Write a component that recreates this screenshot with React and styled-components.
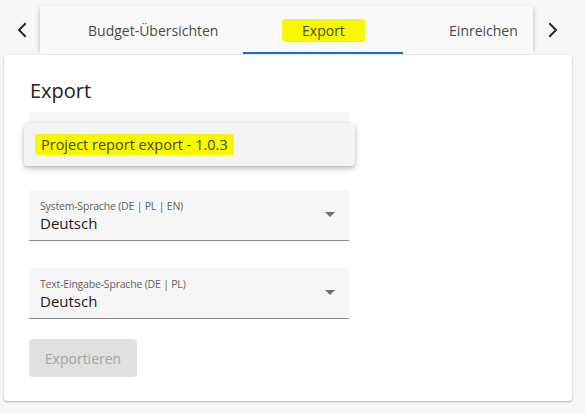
import React from "react";
import styled, { createGlobalStyle } from "styled-components";

const Global = createGlobalStyle`
  html, body { margin: 0; padding: 0; background: #f7f7f7; }
  body { font-family: "Open Sans", "Noto Sans", sans-serif; color: #212121; }
  * { box-sizing: border-box; }
`;

const Page = styled.div`
  width: 585px;
  height: 413px;
  padding: 6px 12px 0 0;
  display: flex;
  flex-direction: column;
`;

const TabBar = styled.div`
  display: flex;
  height: 48px;
`;

const Arrow = styled.button`
  width: 40px;
  flex: none;
  border: 0;
  background: transparent;
  display: flex;
  align-items: center;
  justify-content: center;
  padding: 0 0 0 ${(p) => (p.$side === "left" ? "3px" : "0")};
  color: #333;
`;

const Strip = styled.div`
  flex: 1;
  display: flex;
  overflow: hidden;
  padding-left: 23px;
  background: #f9f9f9;
  box-shadow: -3px 0 4px -2px rgba(0, 0, 0, 0.18), 3px 0 4px -2px rgba(0, 0, 0, 0.18);
  position: relative;
  z-index: 1;
`;

const Tab = styled.div`
  flex: none;
  min-width: 160px;
  padding: 0 25px;
  display: flex;
  align-items: center;
  justify-content: center;
  font-size: 14px;
  font-weight: 500;
  color: #4a4a4a;
  border-bottom: 2px solid ${(p) => (p.$active ? "#1a6fc0" : "transparent")};
  padding-top: 2px;
  white-space: nowrap;
`;

const Marker = styled.span`
  background: #f7f700;
  padding: ${(p) => p.$pad || "2px 20px"};
  border-radius: 3px 6px 2px 5px / 4px 2px 5px 3px;
  color: #4a4a10;
`;

const Card = styled.section`
  margin: 1px 1px 0 4px;
  background: #fff;
  border-radius: 4px;
  box-shadow: 0 1px 3px rgba(0, 0, 0, 0.22), 0 1px 1px rgba(0, 0, 0, 0.08);
  padding: 20px 25px 24px;
  height: 346px;
  position: relative;
`;

const Title = styled.h2`
  margin: 0 0 5px 1px;
  font-size: 20px;
  font-weight: 400;
  line-height: 32px;
  color: #222;
`;

const Form = styled.div`
  display: flex;
  flex-direction: column;
  gap: 27px;
  width: 320px;
`;

const Field = styled.div`
  position: relative;
  height: 51px;
  background: #f6f6f6;
  border-radius: 4px 4px 0 0;
  border-bottom: 1px solid #8c8c8c;
  padding: 9px 11px 0;
  display: flex;
  flex-direction: column;
`;

const Label = styled.span`
  font-size: 10.5px;
  line-height: 14px;
  color: #5f5f5f;
  letter-spacing: -0.2px;
`;

/* small red required mark peeking out above the open menu */
const RequiredMark = styled.span`
  width: 1px;
  height: 4px;
  margin: 7px 0 0 3px;
  background: #c62828;
`;

const Value = styled.span`
  font-size: 15px;
  line-height: 20px;
  color: #1a1a1a;
`;

const Caret = styled.span`
  position: absolute;
  right: 14px;
  top: 22px;
  width: 0;
  height: 0;
  border-left: 5px solid transparent;
  border-right: 5px solid transparent;
  border-top: 5px solid #6e6e6e;
`;

const Button = styled.button`
  margin-top: 20px;
  width: 108px;
  height: 38px;
  border: 0;
  border-radius: 4px;
  background: #e0e0e0;
  color: #a6a6a6;
  font-family: inherit;
  font-size: 14px;
  padding: 0;
`;

const Menu = styled.div`
  position: absolute;
  left: 20px;
  top: 68px;
  width: 331px;
  height: 43px;
  background: #f4f4f4;
  border-radius: 4px;
  box-shadow: 0 3px 6px rgba(0, 0, 0, 0.2), 0 1px 3px rgba(0, 0, 0, 0.14);
  display: flex;
  align-items: center;
  padding-left: 11px;
  font-size: 14.5px;
  color: #1e1e1e;
`;

const Chevron = ({ dir }) => (
  <svg width="12" height="16" viewBox="0 0 12 16" fill="none">
    <polyline
      points={dir === "left" ? "9,2 3,8 9,14" : "3,2 9,8 3,14"}
      stroke="#2b2b2b"
      strokeWidth="2"
      strokeLinecap="square"
    />
  </svg>
);

const tabs = [
  { label: "Budget-Übersichten" },
  { label: "Export", active: true },
  { label: "Einreichen" },
];

const fields = [
  { label: "System-Sprache (DE | PL | EN)", value: "Deutsch" },
  { label: "Text-Eingabe-Sprache (DE | PL)", value: "Deutsch" },
];

export default function App() {
  return (
    <>
      <Global />
      <Page>
        <TabBar>
          <Arrow $side="left" aria-label="zurück">
            <Chevron dir="left" />
          </Arrow>
          <Strip>
            {tabs.map((t) => (
              <Tab key={t.label} $active={t.active}>
                {t.active ? <Marker>{t.label}</Marker> : t.label}
              </Tab>
            ))}
          </Strip>
          <Arrow $side="right" aria-label="weiter">
            <Chevron dir="right" />
          </Arrow>
        </TabBar>
        <Card>
          <Title>Export</Title>
          <Form>
            <Field>
              <RequiredMark />
              <Caret />
            </Field>
            {fields.map((f) => (
              <Field key={f.label}>
                <Label>{f.label}</Label>
                <Value>{f.value}</Value>
                <Caret />
              </Field>
            ))}
          </Form>
          <Button disabled>Exportieren</Button>
          <Menu>
            <Marker $pad="1px 6px">Project report export - 1.0.3</Marker>
          </Menu>
        </Card>
      </Page>
    </>
  );
}
